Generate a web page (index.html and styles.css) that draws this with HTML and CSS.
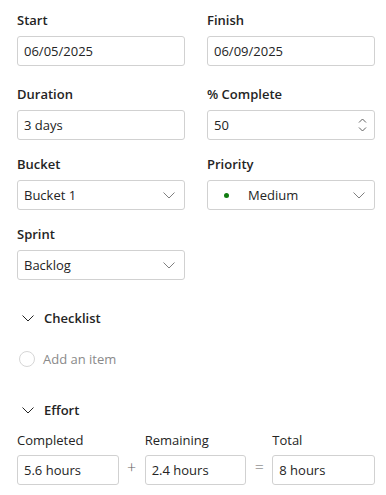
FILE: index.html
```html
<!DOCTYPE html>
<html lang="en">
<head>
    <meta charset="UTF-8">
    <meta name="viewport" content="width=device-width, initial-scale=1.0">
    <title>Task details</title>
    <link rel="stylesheet" href="styles.css">
</head>
<body>
    <div class="panel">
        <div class="grid first-row">
            <div class="field">
                <label>Start</label>
                <div class="box">06/05/2025</div>
            </div>
            <div class="field">
                <label>Finish</label>
                <div class="box">06/09/2025</div>
            </div>
        </div>
        <div class="grid">
            <div class="field">
                <label>Duration</label>
                <div class="box">3 days</div>
            </div>
            <div class="field">
                <label>% Complete</label>
                <div class="box spin">
                    <span>50</span>
                    <span class="arrows">
                        <svg width="9" height="5" viewBox="0 0 9 5"><path d="M1 4.5L4.5 1L8 4.5" fill="none" stroke="#616161" stroke-width="1"/></svg>
                        <svg width="9" height="5" viewBox="0 0 9 5"><path d="M1 0.5L4.5 4L8 0.5" fill="none" stroke="#616161" stroke-width="1"/></svg>
                    </span>
                </div>
            </div>
        </div>
        <div class="grid">
            <div class="field">
                <label>Bucket</label>
                <div class="box select">
                    <span>Bucket 1</span>
                    <svg class="chev" width="12" height="7" viewBox="0 0 12 7"><path d="M0.5 0.5L6 6L11.5 0.5" fill="none" stroke="#707070" stroke-width="0.9"/></svg>
                </div>
            </div>
            <div class="field">
                <label>Priority</label>
                <div class="box select">
                    <span class="priority"><i class="dot"></i>Medium</span>
                    <svg class="chev" width="12" height="7" viewBox="0 0 12 7"><path d="M0.5 0.5L6 6L11.5 0.5" fill="none" stroke="#707070" stroke-width="0.9"/></svg>
                </div>
            </div>
        </div>
        <div class="grid">
            <div class="field">
                <label>Sprint</label>
                <div class="box select">
                    <span>Backlog</span>
                    <svg class="chev" width="12" height="7" viewBox="0 0 12 7"><path d="M0.5 0.5L6 6L11.5 0.5" fill="none" stroke="#707070" stroke-width="0.9"/></svg>
                </div>
            </div>
        </div>

        <div class="section-head">
            <svg width="12" height="7" viewBox="0 0 12 7"><path d="M0.5 0.5L6 6L11.5 0.5" fill="none" stroke="#242424" stroke-width="1"/></svg>
            <span>Checklist</span>
        </div>
        <div class="add-item">
            <span class="circle"></span>
            <span>Add an item</span>
        </div>

        <div class="section-head effort-head">
            <svg width="12" height="7" viewBox="0 0 12 7"><path d="M0.5 0.5L6 6L11.5 0.5" fill="none" stroke="#242424" stroke-width="1"/></svg>
            <span>Effort</span>
        </div>
        <div class="effort">
            <div class="field">
                <label class="plain">Completed</label>
                <div class="box">5.6 hours</div>
            </div>
            <span class="sign">+</span>
            <div class="field">
                <label class="plain">Remaining</label>
                <div class="box">2.4 hours</div>
            </div>
            <span class="sign">=</span>
            <div class="field">
                <label class="plain">Total</label>
                <div class="box">8 hours</div>
            </div>
        </div>
    </div>
</body>
</html>
```

FILE: styles.css
```css
*{
    margin: 0;
    padding: 0;
    box-sizing: border-box;
}
body{
    font-family: 'Open Sans', 'Noto Sans', sans-serif;
    font-size: 13px;
    color: #242424;
    background: #fff;
}
.panel{
    padding: 10px 11px 0 17px;
}
.grid{
    display: grid;
    grid-template-columns: 168px 168px;
    column-gap: 22px;
    margin-bottom: 14px;
}
.first-row{
    margin-bottom: 18px;
}
.field label{
    display: block;
    font-size: 13px;
    font-weight: 600;
    line-height: 20px;
    margin-bottom: 6px;
}
.field label.plain{
    font-weight: 400;
    margin-bottom: 5px;
}
.box{
    height: 30px;
    border: 1px solid #d1d1d1;
    border-radius: 3px;
    padding: 0 10px 0 6px;
    display: flex;
    align-items: center;
    justify-content: space-between;
    line-height: 1;
}
.select .chev{
    margin-right: -1px;
}
.spin{
    padding-right: 7px;
}
.arrows{
    display: flex;
    flex-direction: column;
    gap: 4px;
}
.arrows svg{
    display: block;
}
.priority{
    display: flex;
    align-items: center;
}
.dot{
    width: 5px;
    height: 5px;
    border-radius: 50%;
    background: #107c10;
    margin: 0 19px 0 10px;
}
.section-head{
    display: flex;
    align-items: center;
    height: 24px;
    margin-top: 26px;
    padding-left: 5px;
    font-size: 13px;
    font-weight: 600;
}
.section-head svg{
    margin-right: 10px;
}
.add-item{
    display: flex;
    align-items: center;
    height: 24px;
    margin-top: 17px;
    padding-left: 2px;
    color: #8a8a8a;
}
.circle{
    width: 16px;
    height: 16px;
    border: 1px solid #d6d6d6;
    border-radius: 50%;
    margin-right: 8px;
}
.effort-head{
    margin-top: 27px;
}
.effort{
    display: flex;
    align-items: flex-end;
    margin-top: 8px;
}
.effort .field{
    width: 102px;
}
.effort .field:last-child{
    width: 103px;
}
.sign{
    width: 26px;
    height: 30px;
    text-align: center;
    font-size: 16px;
    font-weight: 300;
    color: #616161;
    line-height: 24px;
}
```
